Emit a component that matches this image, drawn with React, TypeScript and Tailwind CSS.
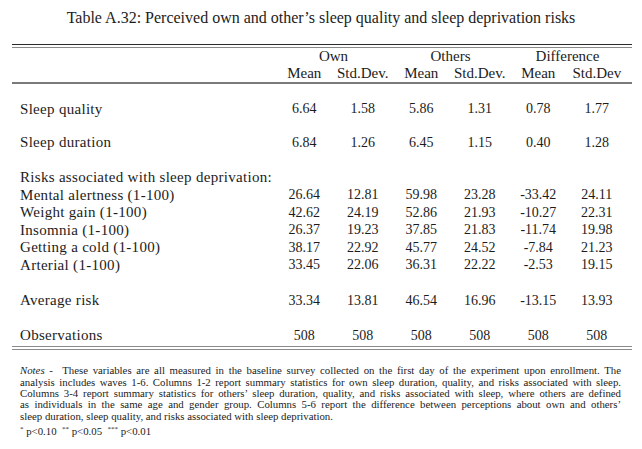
import React from "react";

const serif = { fontFamily: '"Liberation Serif", "Times New Roman", serif' };

type Row = { label: string; vals: string[] };

const risks: Row[] = [
  { label: "Mental alertness (1-100)", vals: ["26.64", "12.81", "59.98", "23.28", "-33.42", "24.11"] },
  { label: "Weight gain (1-100)", vals: ["42.62", "24.19", "52.86", "21.93", "-10.27", "22.31"] },
  { label: "Insomnia (1-100)", vals: ["26.37", "19.23", "37.85", "21.83", "-11.74", "19.98"] },
  { label: "Getting a cold (1-100)", vals: ["38.17", "22.92", "45.77", "24.52", "-7.84", "21.23"] },
  { label: "Arterial (1-100)", vals: ["33.45", "22.06", "36.31", "22.22", "-2.53", "19.15"] },
];

function DataRow({ row, className = "" }: { row: Row; className?: string }) {
  return (
    <div className={`flex h-[17.6px] items-center ${className}`}>
      <div className="w-[263px] pl-[8px] text-[15px] tracking-[0.3px] leading-none">{row.label}</div>
      {row.vals.map((v, i) => (
        <div key={i} className="w-[58.5px] text-center text-[14px] leading-none">
          {v}
        </div>
      ))}
    </div>
  );
}

export default function App() {
  return (
    <div className="w-[642px] h-[449px] bg-white text-[#1c1c1c] overflow-hidden" style={serif}>
      <div className="pt-[8px] h-[28px] text-center text-[16px] leading-[20px]">
        Table A.32: Perceived own and other’s sleep quality and sleep deprivation risks
      </div>
      <div className="ml-[12px] w-[620px] mt-[16px]">
        <div className="h-[1px] bg-[#2a2a2a]" />
        <div className="h-[2px]" />
        <div className="h-[1px] bg-[#8a8a8a]" />
        <div className="flex h-[17px] items-center text-[15px] leading-none">
          <div className="w-[263px]" />
          <div className="w-[117px] text-center">Own</div>
          <div className="w-[117px] text-center">Others</div>
          <div className="w-[117px] text-center">Difference</div>
        </div>
        <div className="flex h-[17px] items-center text-[15px] leading-none">
          <div className="w-[263px]" />
          {["Mean", "Std.Dev.", "Mean", "Std.Dev.", "Mean", "Std.Dev"].map((h, i) => (
            <div key={i} className="w-[58.5px] text-center">
              {h}
            </div>
          ))}
        </div>
        <div className="h-[1.5px] bg-[#7a7a7a]" />
        <DataRow className="mt-[17px]" row={{ label: "Sleep quality", vals: ["6.64", "1.58", "5.86", "1.31", "0.78", "1.77"] }} />
        <DataRow className="mt-[16px]" row={{ label: "Sleep duration", vals: ["6.84", "1.26", "6.45", "1.15", "0.40", "1.28"] }} />
        <div className="mt-[17px] flex h-[17.6px] items-center">
          <div className="pl-[8px] text-[15px] tracking-[0.3px] leading-none">Risks associated with sleep deprivation:</div>
        </div>
        {risks.map((r) => (
          <DataRow key={r.label} row={r} />
        ))}
        <DataRow className="mt-[17.6px]" row={{ label: "Average risk", vals: ["33.34", "13.81", "46.54", "16.96", "-13.15", "13.93"] }} />
        <DataRow className="mt-[17.4px]" row={{ label: "Observations", vals: ["508", "508", "508", "508", "508", "508"] }} />
        <div className="mt-[2px] h-[1px] bg-[#8a8a8a]" />
        <div className="h-[2px]" />
        <div className="h-[1px] bg-[#8a8a8a]" />
      </div>
      <div className="ml-[20px] w-[601px] mt-[15px] text-[10.8px] leading-[11.3px]">
        <div className="whitespace-nowrap text-justify [text-align-last:justify]">
          <i>Notes</i> - &nbsp;These variables are all measured in the baseline survey collected on the first day of the experiment upon enrollment. The
        </div>
        <div className="whitespace-nowrap text-justify [text-align-last:justify]">
          analysis includes waves 1-6. Columns 1-2 report summary statistics for own sleep duration, quality, and risks associated with sleep.
        </div>
        <div className="whitespace-nowrap text-justify [text-align-last:justify]">
          Columns 3-4 report summary statistics for others’ sleep duration, quality, and risks associated with sleep, where others are defined
        </div>
        <div className="whitespace-nowrap text-justify [text-align-last:justify]">
          as individuals in the same age and gender group. Columns 5-6 report the difference between perceptions about own and others’
        </div>
        <div>sleep duration, sleep quality, and risks associated with sleep deprivation.</div>
        <div className="mt-[4px]">
          <sup className="text-[7px]">*</sup> p&lt;0.10 &nbsp;<sup className="text-[7px]">**</sup> p&lt;0.05 &nbsp;
          <sup className="text-[7px]">***</sup> p&lt;0.01
        </div>
      </div>
    </div>
  );
}
